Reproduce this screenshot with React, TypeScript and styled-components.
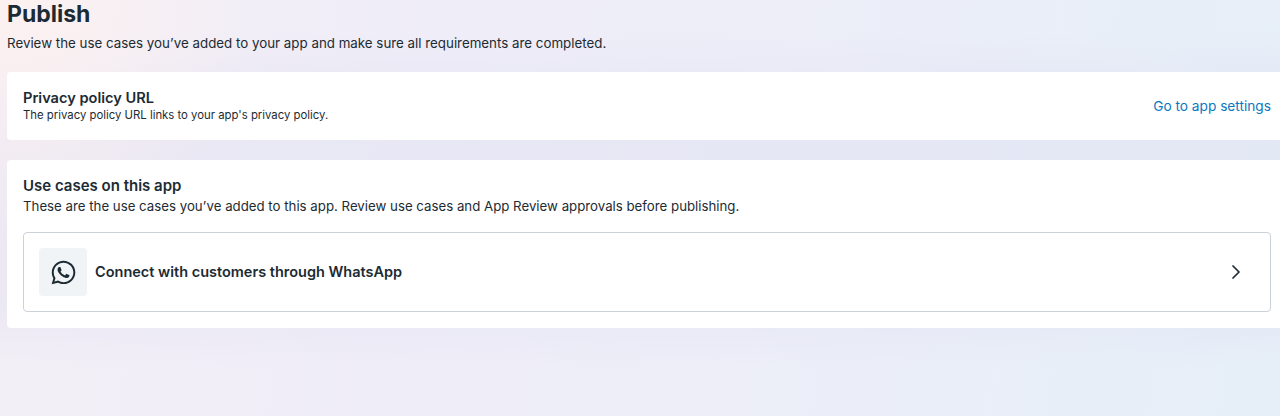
import styled, { createGlobalStyle } from "styled-components";
import { FaWhatsapp } from "react-icons/fa";
import { LuChevronRight } from "react-icons/lu";

const GlobalStyle = createGlobalStyle`
  html, body {
    margin: 0;
    padding: 0;
    height: 100%;
  }
  body {
    font-family: Inter, "Noto Sans", "Liberation Sans", sans-serif;
    color: #1c2b33;
  }
`;

const Page = styled.div`
  box-sizing: border-box;
  height: 416px;
  overflow: hidden;
  padding: 0 0 0 7px;
  background:
    radial-gradient(circle at 0 0, #fdf1f0 0%, rgba(253, 241, 240, 0) 260px),
    linear-gradient(180deg, rgba(222, 222, 240, 0) 8%, rgba(222, 222, 240, 0.4) 24%, rgba(222, 222, 240, 0.4) 72%, rgba(222, 222, 240, 0) 88%),
    linear-gradient(100deg, #f3eff6 0%, #efedf8 35%, #ebeef8 68%, #e6eff8 100%);
`;

const Title = styled.h1`
  margin: 0;
  font-size: 23px;
  line-height: 28px;
  font-weight: 700;
`;

const Subtitle = styled.p`
  margin: 7px 0 21px;
  font-size: 13.33px;
  line-height: 16px;
`;

const Card = styled.section`
  background: #fff;
  border-radius: 4px 0 0 4px;
  padding: 16px 9px 16px 16px;
  margin-bottom: 20px;
`;

const PrivacyRow = styled.div`
  display: flex;
  align-items: center;
  justify-content: space-between;
  height: 36px;
`;

const PrivacyText = styled.div`
  padding-bottom: 2px;
`;

const CardTitle = styled.h2<{ $wide?: boolean }>`
  margin: 0;
  font-size: ${(p) => (p.$wide ? "15px" : "14.6px")};
  line-height: 20px;
  font-weight: 600;
`;

const CardText = styled.p<{ $small?: boolean }>`
  margin: ${(p) => (p.$small ? "0" : "2px 0 0")};
  font-size: ${(p) => (p.$small ? "11.35px" : "13.25px")};
  line-height: ${(p) => (p.$small ? "14px" : "16px")};
`;

const Link = styled.a`
  color: #0a78be;
  font-size: 13.7px;
  line-height: 16px;
  text-decoration: none;
`;

const UseCaseRow = styled.div`
  display: flex;
  align-items: center;
  gap: 8px;
  height: 80px;
  box-sizing: border-box;
  margin-top: 18px;
  padding: 0 22px 0 15px;
  border: 1px solid #cbd2d9;
  border-radius: 4px;
`;

const IconBox = styled.div`
  width: 48px;
  height: 48px;
  display: flex;
  align-items: center;
  justify-content: center;
  background: #f1f4f7;
  border-radius: 4px;
  font-size: 27px;
`;

const UseCaseName = styled.span`
  flex: 1;
  font-size: 14.5px;
  line-height: 20px;
  font-weight: 600;
`;

export default function App() {
  return (
    <>
      <GlobalStyle />
      <Page>
        <Title>Publish</Title>
        <Subtitle>Review the use cases you’ve added to your app and make sure all requirements are completed.</Subtitle>
        <Card>
          <PrivacyRow>
            <PrivacyText>
              <CardTitle>Privacy policy URL</CardTitle>
              <CardText $small>The privacy policy URL links to your app's privacy policy.</CardText>
            </PrivacyText>
            <Link href="#">Go to app settings</Link>
          </PrivacyRow>
        </Card>
        <Card>
          <CardTitle $wide>Use cases on this app</CardTitle>
          <CardText>These are the use cases you’ve added to this app. Review use cases and App Review approvals before publishing.</CardText>
          <UseCaseRow>
            <IconBox>
              <FaWhatsapp />
            </IconBox>
            <UseCaseName>Connect with customers through WhatsApp</UseCaseName>
            <LuChevronRight size={24} strokeWidth={1.75} />
          </UseCaseRow>
        </Card>
      </Page>
    </>
  );
}
